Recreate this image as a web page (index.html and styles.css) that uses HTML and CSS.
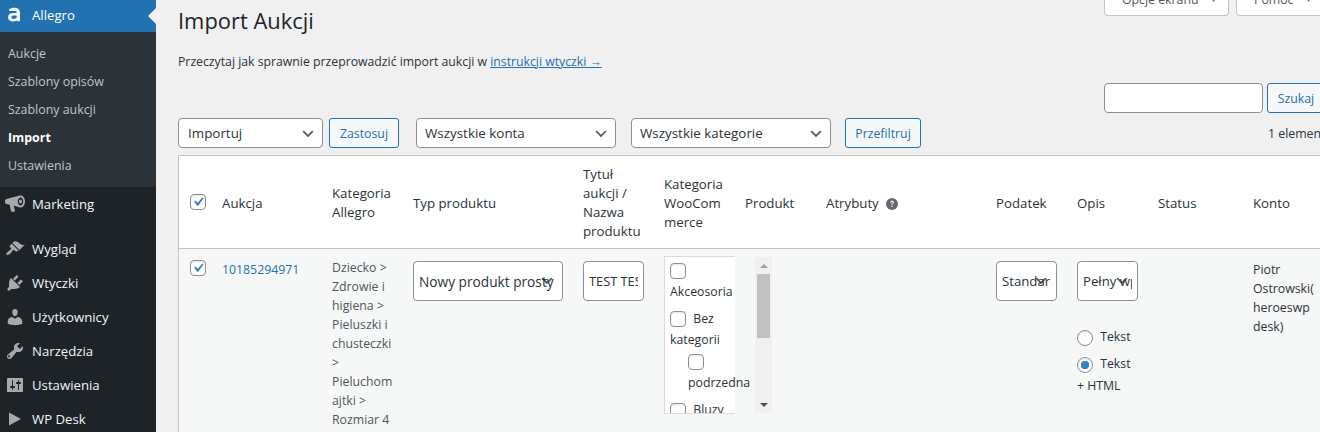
FILE: index.html
```html
<!DOCTYPE html>
<html lang="pl">
<head>
<meta charset="utf-8">
<title>Import Aukcji</title>
<link rel="stylesheet" href="styles.css">
</head>
<body>
<div class="layout">
  <nav class="sidebar">
    <a class="menu-item current" href="#">
      <svg class="icon" viewBox="0 0 20 20"><path d="M4 4.600C5.200 3.300 7 2.800 9.400 2.800c3.600 0 5.600 1.600 5.600 4.800v8.600h-3.300v-.9c-1 .8-2.200 1.200-3.700 1.200C4.800 16.500 3 14.900 3 12.300c0-2.700 2-4.200 5.500-4.200h3.200v-.5c0-1-.7-1.600-2.400-1.600H4zM11.700 10.600H8.800c-1.400 0-2.300.5-2.300 1.600s.9 1.700 2.100 1.700c1.300 0 2.400-.5 3.100-1.300z" fill="#f0f6fc" fill-rule="evenodd"/></svg>
      <span>Allegro</span>
    </a>
    <ul class="submenu">
      <li><a href="#">Aukcje</a></li>
      <li><a href="#">Szablony opisów</a></li>
      <li><a href="#">Szablony aukcji</a></li>
      <li><a class="active" href="#">Import</a></li>
      <li><a href="#">Ustawienia</a></li>
    </ul>
    <a class="menu-item" href="#">
      <svg class="icon" viewBox="0 0 20 20"><path fill-rule="evenodd" fill="#a7aaad" d="M15.500 1.500c2.600 0 4.500 2.600 4.500 6s-1.900 6-4.500 6c-.5 0-1-.1-1.400-.3L8.700 11.500l1.300 5.300c.1.500-.2.900-.7.900H6.800c-.4 0-.7-.3-.8-.6L4.700 10.800 1.500 10C.6 9.800 0 9 0 8V7c0-1 .6-1.800 1.500-2l12.300-3.200c.5-.2 1.100-.3 1.700-.3zM15.500 3.500c-1.500 0-2.700 1.800-2.700 4s1.200 4 2.700 4 2.700-1.800 2.700-4-1.200-4-2.700-4zM15.500 5.500c.9 0 1.500.9 1.500 2s-.6 2-1.500 2-1.500-.9-1.500-2 .6-2 1.500-2z"/></svg>
      <span>Marketing</span>
    </a>
    <div class="separator"></div>
    <a class="menu-item" href="#">
      <svg class="icon" viewBox="0 0 20 20"><path d="M14.480 11.060L7.410 3.990l1.500-1.500c.5-.56 2.300-.47 3.510.32 1.210.8 1.430 1.280 2.910 2.100 1.180.64 2.450 1.260 4.450.85zm-.71.71L6.700 4.700 4.930 6.470c-.39.39-.39 1.020 0 1.410l1.060 1.060c.39.39.39 1.030 0 1.420-.6.6-1.430 1.110-2.210 1.690-.35.26-.7.53-1.010.84C1.430 13.710.96 15.180 1.510 15.740c.56.55 2.030.08 3.860-1.240.3-.31.57-.66.84-1.010.58-.78 1.090-1.610 1.690-2.210.39-.39 1.020-.39 1.410 0l1.060 1.060c.39.39 1.020.39 1.410 0z" fill="#a7aaad"/></svg>
      <span>Wygląd</span>
    </a>
    <a class="menu-item" href="#">
      <svg class="icon" viewBox="0 0 20 20"><path d="M13.110 4.360L9.870 7.600 8 5.730l3.240-3.240c.35-.34 1.050-.2 1.560.32.52.51.66 1.210.31 1.550zm-8 1.770l.91-1.120 9.010 9.010-1.190.84c-.71.71-2.630 1.160-3.820 1.160H6.140L4.900 17.260c-.59.59-1.540.59-2.120 0-.59-.58-.59-1.530 0-2.120l1.240-1.240v-3.880c0-1.130.4-3.190 1.090-3.880zm7.260 3.970l3.240-3.240c.34-.35 1.040-.21 1.550.31.52.51.66 1.210.31 1.560l-3.240 3.250z" fill="#a7aaad"/></svg>
      <span>Wtyczki</span>
    </a>
    <a class="menu-item" href="#">
      <svg class="icon" viewBox="0 0 20 20"><path d="M10 9.250c-2.270 0-2.730-3.440-2.730-3.440C7 4.020 7.820 2 9.970 2c2.160 0 2.980 2.020 2.710 3.810 0 0-.41 3.440-2.680 3.440zm0 2.570L12.720 10c2.390 0 4.520 2.330 4.520 4.530v2.490s-3.650 1.130-7.240 1.130c-3.650 0-7.240-1.130-7.240-1.130v-2.490c0-2.250 1.940-4.480 4.470-4.480z" fill="#a7aaad"/></svg>
      <span>Użytkownicy</span>
    </a>
    <a class="menu-item" href="#">
      <svg class="icon" viewBox="0 0 20 20"><path d="M16.680 9.770c-1.340 1.340-3.300 1.670-4.950.99l-5.410 6.520c-.99.99-2.590.99-3.580 0s-.99-2.590 0-3.570l6.520-5.420c-.68-1.650-.35-3.610.99-4.950 1.280-1.280 3.120-1.640 4.720-1.090l-2.900 2.890 2.820 2.820 2.860-2.870c.53 1.580.17 3.400-1.070 4.680zm-13.350 6.130c.39.39 1.030.39 1.420 0 .39-.39.39-1.030 0-1.420-.39-.39-1.030-.39-1.420 0-.39.39-.39 1.030 0 1.420z" fill="#a7aaad"/></svg>
      <span>Narzędzia</span>
    </a>
    <a class="menu-item" href="#">
      <svg class="icon" viewBox="0 0 20 20"><path d="M18 16V4c0-.55-.45-1-1-1H3c-.55 0-1 .45-1 1v12c0 .55.45 1 1 1h14c.55 0 1-.45 1-1zM8 11h1c.55 0 1 .45 1 1s-.45 1-1 1H8v1.500c0 .28-.22.5-.5.5s-.5-.22-.5-.5V13H6c-.55 0-1-.45-1-1s.45-1 1-1h1V5.500c0-.28.22-.5.5-.5s.5.22.5.5V11zm5-2h-1c-.55 0-1-.45-1-1s.45-1 1-1h1V5.500c0-.28.22-.5.5-.5s.5.22.5.5V7h1c.55 0 1 .45 1 1s-.45 1-1 1h-1v5.500c0 .28-.22.5-.5.5s-.5-.22-.5-.5V9z" fill="#a7aaad" fill-rule="evenodd"/></svg>
      <span>Ustawienia</span>
    </a>
    <a class="menu-item" href="#">
      <svg class="icon" viewBox="0 0 20 20"><path d="M4 3.500l12 6.500L4 16.500z" fill="#a7aaad"/></svg>
      <span>WP Desk</span>
    </a>
  </nav>

  <main class="content">
    <div class="page-head">
      <h1>Import Aukcji</h1>
      <div class="tabs">
        <button class="tab tab-options" type="button">Opcje ekranu<span class="tab-arrow">▼</span></button>
        <button class="tab tab-help" type="button">Pomoc<span class="tab-arrow">▼</span></button>
      </div>
    </div>
    <p class="intro">Przeczytaj jak sprawnie przeprowadzić import aukcji w <a href="#">instrukcji wtyczki →</a></p>

    <div class="search-row">
      <input class="search-input" type="text" aria-label="Szukaj">
      <button class="btn" type="button">Szukaj</button>
    </div>

    <div class="filters">
      <select class="field select-action"><option>Importuj</option></select>
      <button class="btn btn-apply" type="button">Zastosuj</button>
      <select class="field select-account"><option>Wszystkie konta</option></select>
      <select class="field select-category"><option>Wszystkie kategorie</option></select>
      <button class="btn btn-filter" type="button">Przefiltruj</button>
      <span class="count">1 element</span>
    </div>

    <table class="auctions">
      <colgroup>
        <col class="c-check"><col class="c-id"><col class="c-n"><col class="c-w"><col class="c-n"><col class="c-n"><col class="c-n"><col class="c-w"><col class="c-n"><col class="c-n"><col class="c-s"><col class="c-n">
      </colgroup>
      <thead>
        <tr>
          <th class="cell-check"><input class="check" type="checkbox" checked aria-label="Zaznacz wszystkie"></th>
          <th>Aukcja</th>
          <th>Kategoria Allegro</th>
          <th>Typ produktu</th>
          <th>Tytuł aukcji / Nazwa produktu</th>
          <th>Kategoria WooCom merce</th>
          <th>Produkt</th>
          <th>Atrybuty <svg class="help" viewBox="0 0 20 20"><circle cx="10" cy="10" r="10" fill="#646970"/><path d="M7 7.700c.1-2 1.300-3 3.200-3 1.800 0 3 1 3 2.500 0 1.200-.7 1.800-1.600 2.400-.8.500-1 .8-1 1.600H8.900c0-1.400.4-2 1.300-2.600.8-.5 1.100-.8 1.100-1.300 0-.6-.4-1-1.100-1-.8 0-1.200.4-1.300 1.400zM8.800 13h2v2.200h-2z" fill="#fff"/></svg></th>
          <th>Podatek</th>
          <th>Opis</th>
          <th>Status</th>
          <th>Konto</th>
        </tr>
      </thead>
      <tbody>
        <tr>
          <td class="cell-check"><input class="check" type="checkbox" checked aria-label="Zaznacz aukcję"></td>
          <td class="cell-low"><a href="#">10185294971</a></td>
          <td class="muted">Dziecko &gt; Zdrowie i higiena &gt; Pieluszki i chusteczki &gt; Pieluchom ajtki &gt; Rozmiar 4</td>
          <td class="cell-field"><select class="field tall"><option>Nowy produkt prosty</option></select></td>
          <td class="cell-field"><input class="field tall text-field" type="text" value="TEST TEST"></td>
          <td class="cell-list">
            <div class="cat-box">
              <ul class="cat-list">
                <li><label><input class="check" type="checkbox"> Akceosoria</label></li>
                <li><label><input class="check" type="checkbox"> Bez kategorii</label>
                  <ul>
                    <li><label><input class="check" type="checkbox"> podrzedna</label></li>
                  </ul>
                </li>
                <li><label><input class="check" type="checkbox"> Bluzy</label></li>
              </ul>
              <div class="scrollbar" aria-hidden="true">
                <span class="sb-up"></span>
                <span class="sb-thumb"></span>
                <span class="sb-down"></span>
              </div>
            </div>
          </td>
          <td></td>
          <td></td>
          <td class="cell-field"><select class="field tall compact"><option>Standardowa</option></select></td>
          <td class="cell-field">
            <select class="field tall compact"><option>Pełny wpis</option></select>
            <div class="radios">
              <label><input class="radio" type="radio" name="format"> Tekst</label>
              <label><input class="radio" type="radio" name="format" checked> Tekst + HTML</label>
            </div>
          </td>
          <td></td>
          <td class="cell-low">Piotr Ostrowski( heroeswp desk)</td>
        </tr>
      </tbody>
    </table>
  </main>
</div>
</body>
</html>
```
FILE: styles.css
```css
* { box-sizing: border-box; }
html, body { margin: 0; height: 100%; overflow: hidden; }
body {
  background: #f0f0f1;
  color: #2c3338;
  font: 12.3px/19px "Open Sans", sans-serif;
}
a { color: #2271b1; text-decoration: none; }
.layout { display: flex; height: 432px; }

/* Sidebar */
.sidebar { flex: 0 0 156px; background: #1d2327; font-size: 13.2px; }
.menu-item {
  display: flex; align-items: center; height: 34px;
  color: #f0f6fc; position: relative; padding-left: 5px;
}
.menu-item .icon { width: 20px; height: 20px; flex: none; margin-right: 7px; }
.menu-item span { display: block; }
.menu-item.current { height: 32px; background: #2271b1; color: #fff; padding-bottom: 2px; }
.menu-item.current::after {
  content: ""; position: absolute; right: 0; top: 8px;
  border: 8px solid transparent; border-left-width: 0; border-right-color: #f0f0f1;
}
.separator { height: 11px; }
.submenu { margin: 0; padding: 8px 0 7px; list-style: none; background: #2c3338; }
.submenu a { display: block; height: 28px; line-height: 28px; padding-left: 8px; color: #c3c4c7; font-size: 12.4px; }
.submenu a.active { color: #fff; font-weight: 700; }

/* Main */
.content { flex: 1; min-width: 0; padding-left: 22px; overflow: hidden; }
.page-head { display: flex; justify-content: space-between; height: 45px; }
h1 { margin: 6px 0 0; font-size: 21.9px; font-weight: 400; line-height: 29px; color: #1d2327; }
.tabs { display: flex; gap: 7px; height: 16px; align-items: flex-end; overflow: hidden; margin-right: -20px; }
.tab {
  height: 30px; border: 1px solid #c3c4c7; border-top: 0; border-radius: 0 0 4px 4px;
  background: #fff; color: #50575e; font: inherit; padding: 0;
  flex: none; text-align: left; padding-bottom: 4px; padding-left: 17px;
}
.tab-options { width: 125px; }
.tab-help { width: 104px; }
.tab-arrow { font-size: 8px; margin-left: 11px; vertical-align: 2px; }
.intro { margin: 7px 0 0; height: 19px; font-size: 12.25px; }
.intro a { color: #2271b1; text-decoration: underline; }

.search-row { display: flex; gap: 4px; margin: 12px 0 0 926px; height: 30px; }
.search-input {
  width: 159px; flex: none; height: 30px; border: 1px solid #8c8f94; border-radius: 4px; background: #fff; padding: 0 8px;
}
.search-row .btn { flex: none; width: 58px; }
.filters { display: flex; align-items: center; height: 30px; margin-top: 5px; position: relative; white-space: nowrap; }
.btn {
  height: 30px; border: 1px solid #2271b1; border-radius: 3px; background: #f6f7f7;
  color: #2271b1; font: inherit; padding: 0; flex: none;
}
.field {
  display: block; height: 30px; border: 1px solid #8c8f94; border-radius: 4px; background-color: #fff;
  color: #2c3338; font: inherit; font-size: 13.4px; margin: 0;
}
select.field {
  appearance: none; -webkit-appearance: none; padding: 0 24px 0 8px;
  background: #fff url("data:image/svg+xml;charset=US-ASCII,%3Csvg%20width%3D%2220%22%20height%3D%2220%22%20xmlns%3D%22http%3A%2F%2Fwww.w3.org%2F2000%2Fsvg%22%3E%3Cpath%20d%3D%22M5%206l5%205%205-5%202%201-7%207-7-7%202-1z%22%20fill%3D%22%23555%22%2F%3E%3C%2Fsvg%3E") no-repeat right 6px top 55%;
  background-size: 16px 16px;
}
.select-action { width: 145px; flex: none; }
select.select-action { padding-left: 9px; }
.btn-apply { width: 70px; margin-left: 6px; }
.select-account { width: 200px; flex: none; margin-left: 17px; }
.select-category { width: 200px; flex: none; margin-left: 15px; }
.btn-filter { width: 76px; margin-left: 14px; }
.count { position: absolute; left: 1090px; top: 6px; }

/* Table */
.auctions {
  table-layout: fixed; border-collapse: separate; border-spacing: 0;
  width: 1145px; margin-top: 7px; background: #fff;
  border: 1px solid #c3c4c7; border-right: 0;
}
.c-check { width: 33px; }
.c-id { width: 110px; }
.c-n { width: 81px; }
.c-w { width: 170px; }
.c-s { width: 95px; }
th, td { padding: 10px; text-align: left; font-weight: 400; overflow-wrap: anywhere; }
th { height: 93px; vertical-align: middle; border-bottom: 1px solid #c3c4c7; padding-top: 9px; padding-bottom: 7px; font-size: 13.25px; }
td { vertical-align: top; background: #f6f7f7; }
.cell-check { padding: 0 0 0 11px; }
th.cell-check { padding-top: 0; padding-bottom: 0; }
td.cell-check { padding-top: 11px; }
.cell-check .check { display: block; }
td.cell-low { padding-top: 11px; }
td.muted { color: #50575e; padding-top: 9px; }
.help { width: 12px; height: 12px; vertical-align: -2px; margin-left: 4px; }

.check, .radio {
  appearance: none; -webkit-appearance: none;
  width: 16px; height: 16px; margin: 0; padding: 0; border: 1px solid #8c8f94; background: #fff;
  box-shadow: inset 0 1px 2px rgba(0,0,0,.1); vertical-align: middle; display: inline-block;
}
.check { border-radius: 4px; }
.radio { border-radius: 50%; margin-right: 4px; }
.check:checked {
  background: #fff url("data:image/svg+xml;utf8,%3Csvg%20xmlns%3D%27http%3A%2F%2Fwww.w3.org%2F2000%2Fsvg%27%20viewBox%3D%270%200%2020%2020%27%3E%3Cpath%20d%3D%27M14.830%204.890l1.340.940-5.810%208.380H9.020L5.780%209.670l1.340-1.250%202.570%202.400z%27%20fill%3D%27%233582c4%27%2F%3E%3C%2Fsvg%3E") center / 18px 18px no-repeat;
}
.radio:checked { background: radial-gradient(circle, #3582c4 0, #3582c4 4px, #fff 4.500px); }
.tall { height: 40px; width: 100%; margin-top: 2px; font-size: 13.7px; }
select.tall { padding: 0 5px; background-position: right 7px top 50%; }
select.compact { font-size: 13.2px; }
.text-field { padding: 0 5px; font-size: 12.8px; }

.cell-list { padding: 7px 0 0 10px; }
.cat-box {
  display: flex; width: 109px; height: 158px; border: 1px solid #dcdcde; background: #fff; overflow: hidden;
}
.cat-list { flex: 1; min-width: 0; margin: 0; padding: 2px 3px 0 5px; list-style: none; line-height: 21.5px; }
.cat-list ul { margin: 0; padding: 0 0 0 18px; list-style: none; }
.cat-list > li { margin-bottom: 5.500px; }
.cat-list .check { margin-right: 4px; }
.scrollbar { flex: 0 0 17px; display: flex; flex-direction: column; align-items: center; background: #f0f0f0; }
.sb-up, .sb-down { flex: none; width: 0; height: 0; border: 4px solid transparent; }
.sb-up { border-top: 0; border-bottom: 4px solid #a3a3a3; margin-top: 7px; }
.sb-down { border-bottom: 0; border-top: 4px solid #505050; margin-top: auto; margin-bottom: 6px; }
.sb-thumb { flex: none; width: 13px; height: 64px; background: #c1c1c1; margin-top: 6px; }
.radios { margin-top: 25px; display: flex; flex-direction: column; gap: 5px; }
.radios label { display: block; line-height: 22px; }
```
